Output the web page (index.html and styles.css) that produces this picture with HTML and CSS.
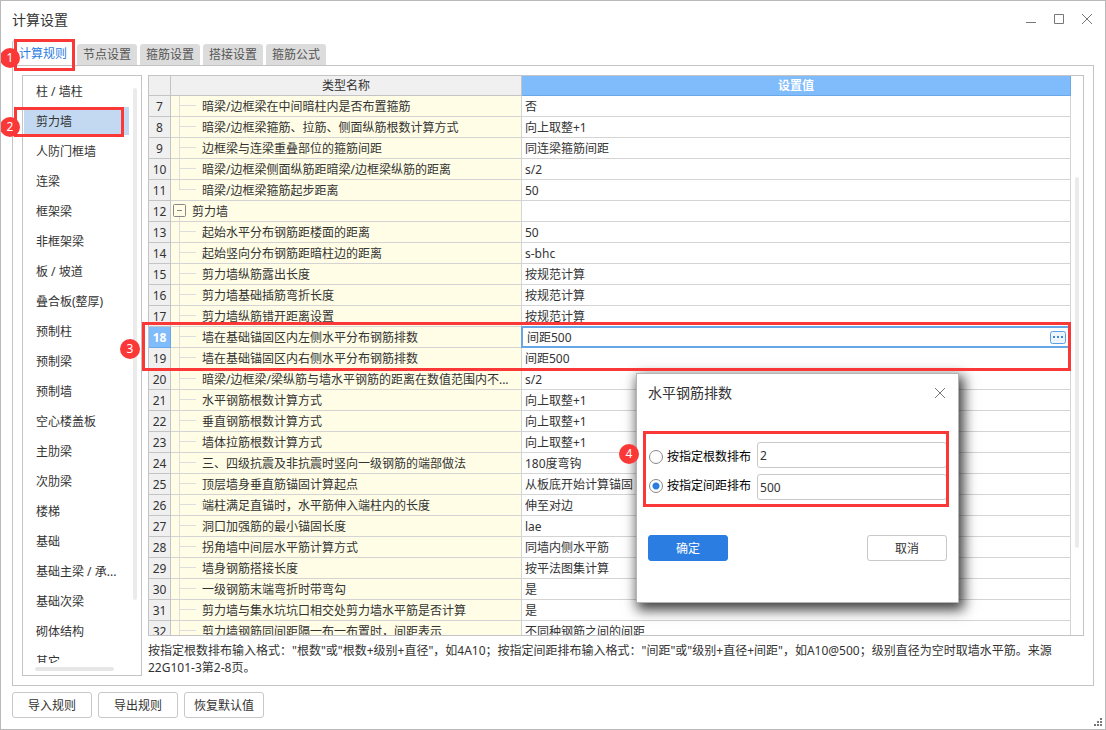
FILE: index.html
```html
<!DOCTYPE html>
<html lang="zh-CN">
<head>
<meta charset="utf-8">
<title>计算设置</title>
<link rel="stylesheet" href="styles.css">
</head>
<body>
<main class="window">
  <header class="titlebar">
    <h1 class="title">计算设置</h1>
    <div class="window-controls">
      <button class="icon-button" type="button" aria-label="最小化"><svg width="12" height="12" viewBox="0 0 12 12"><path d="M1 9.500h10"/></svg></button>
      <button class="icon-button" type="button" aria-label="最大化"><svg width="12" height="12" viewBox="0 0 12 12"><path d="M1.500 1.500h9v9h-9z"/></svg></button>
      <button class="icon-button" type="button" aria-label="关闭"><svg width="12" height="12" viewBox="0 0 12 12"><path d="M1 1l10 10M11 1L1 11"/></svg></button>
    </div>
  </header>

  <nav class="tabs" role="tablist">
    <button class="tab active" type="button" role="tab" aria-selected="true">计算规则</button>
    <button class="tab" type="button" role="tab">节点设置</button>
    <button class="tab" type="button" role="tab">箍筋设置</button>
    <button class="tab" type="button" role="tab">搭接设置</button>
    <button class="tab" type="button" role="tab">箍筋公式</button>
  </nav>

  <section class="panel">
    <aside class="sidebar">
      <div class="sidebar-body">
        <ul class="categories">
          <li class="category">柱 / 墙柱</li>
          <li class="category selected">剪力墙</li>
          <li class="category">人防门框墙</li>
          <li class="category">连梁</li>
          <li class="category">框架梁</li>
          <li class="category">非框架梁</li>
          <li class="category">板 / 坡道</li>
          <li class="category">叠合板(整厚)</li>
          <li class="category">预制柱</li>
          <li class="category">预制梁</li>
          <li class="category">预制墙</li>
          <li class="category">空心楼盖板</li>
          <li class="category">主肋梁</li>
          <li class="category">次肋梁</li>
          <li class="category">楼梯</li>
          <li class="category">基础</li>
          <li class="category">基础主梁 / 承...</li>
          <li class="category">基础次梁</li>
          <li class="category">砌体结构</li>
          <li class="category">其它</li>
        </ul>
        <div class="side-track"><div class="side-thumb"></div></div>
      </div>
      <div class="bottom-thumb"></div>
    </aside>

    <div class="content">
      <div class="grid-frame">
        <div class="grid-view">
          <table class="grid">
            <colgroup><col class="col-number"><col class="col-name"><col></colgroup>
            <thead><tr><th></th><th>类型名称</th><th class="current">设置值</th></tr></thead>
            <tbody>
              <tr><th>7</th><td class="name">暗梁/边框梁在中间暗柱内是否布置箍筋</td><td>否</td></tr>
              <tr><th>8</th><td class="name">暗梁/边框梁箍筋、拉筋、侧面纵筋根数计算方式</td><td>向上取整+1</td></tr>
              <tr><th>9</th><td class="name">边框梁与连梁重叠部位的箍筋间距</td><td>同连梁箍筋间距</td></tr>
              <tr><th>10</th><td class="name">暗梁/边框梁侧面纵筋距暗梁/边框梁纵筋的距离</td><td>s/2</td></tr>
              <tr><th>11</th><td class="name last">暗梁/边框梁箍筋起步距离</td><td>50</td></tr>
              <tr><th>12</th><td class="name group"><button class="toggle" type="button" aria-label="折叠"><svg width="13" height="13" viewBox="0 0 13 13"><rect x=".5" y=".5" width="12" height="12" rx="1"/><path d="M4 6.500h5"/></svg></button>剪力墙</td><td></td></tr>
              <tr><th>13</th><td class="name">起始水平分布钢筋距楼面的距离</td><td>50</td></tr>
              <tr><th>14</th><td class="name">起始竖向分布钢筋距暗柱边的距离</td><td>s-bhc</td></tr>
              <tr><th>15</th><td class="name">剪力墙纵筋露出长度</td><td>按规范计算</td></tr>
              <tr><th>16</th><td class="name">剪力墙基础插筋弯折长度</td><td>按规范计算</td></tr>
              <tr><th>17</th><td class="name">剪力墙纵筋错开距离设置</td><td>按规范计算</td></tr>
              <tr><th class="current">18</th><td class="name">墙在基础锚固区内左侧水平分布钢筋排数</td><td class="editing"><div class="editor"><input class="editor-input" type="text" value="间距500" aria-label="墙在基础锚固区内左侧水平分布钢筋排数"><button class="more" type="button" aria-label="更多"><svg width="16" height="13" viewBox="0 0 16 13"><rect class="more-frame" x=".5" y=".5" width="15" height="12" rx="2"/><path class="more-dots" d="M3 5h2v2H3zM7 5h2v2H7zM11 5h2v2h-2z"/></svg></button></div></td></tr>
              <tr><th>19</th><td class="name">墙在基础锚固区内右侧水平分布钢筋排数</td><td>间距500</td></tr>
              <tr><th>20</th><td class="name">暗梁/边框梁/梁纵筋与墙水平钢筋的距离在数值范围内不...</td><td>s/2</td></tr>
              <tr><th>21</th><td class="name">水平钢筋根数计算方式</td><td>向上取整+1</td></tr>
              <tr><th>22</th><td class="name">垂直钢筋根数计算方式</td><td>向上取整+1</td></tr>
              <tr><th>23</th><td class="name">墙体拉筋根数计算方式</td><td>向上取整+1</td></tr>
              <tr><th>24</th><td class="name">三、四级抗震及非抗震时竖向一级钢筋的端部做法</td><td>180度弯钩</td></tr>
              <tr><th>25</th><td class="name">顶层墙身垂直筋锚固计算起点</td><td>从板底开始计算锚固</td></tr>
              <tr><th>26</th><td class="name">端柱满足直锚时，水平筋伸入端柱内的长度</td><td>伸至对边</td></tr>
              <tr><th>27</th><td class="name">洞口加强筋的最小锚固长度</td><td>lae</td></tr>
              <tr><th>28</th><td class="name">拐角墙中间层水平筋计算方式</td><td>同墙内侧水平筋</td></tr>
              <tr><th>29</th><td class="name">墙身钢筋搭接长度</td><td>按平法图集计算</td></tr>
              <tr><th>30</th><td class="name">一级钢筋末端弯折时带弯勾</td><td>是</td></tr>
              <tr><th>31</th><td class="name">剪力墙与集水坑坑口相交处剪力墙水平筋是否计算</td><td>是</td></tr>
              <tr><th>32</th><td class="name">剪力墙钢筋同间距隔一布一布置时，间距表示</td><td>不同种钢筋之间的间距</td></tr>
            </tbody>
          </table>
        </div>
        <div class="grid-track"><div class="grid-thumb"></div></div>
      </div>
      <p class="hint">按指定根数排布输入格式："根数"或"根数+级别+直径"，如4A10；按指定间距排布输入格式："间距"或"级别+直径+间距"，如A10@500；级别直径为空时取墙水平筋。来源22G101-3第2-8页。</p>
    </div>
  </section>

  <footer class="actions">
    <button class="button" type="button">导入规则</button>
    <button class="button" type="button">导出规则</button>
    <button class="button" type="button">恢复默认值</button>
  </footer>

  <svg class="grip" width="8" height="8" viewBox="0 0 8 8"><path d="M6 0h2v2H6zM3 3h2v2H3zM6 3h2v2H6zM0 6h2v2H0zM3 6h2v2H3zM6 6h2v2H6z"/></svg>

  <form class="dialog" role="dialog" aria-labelledby="dialog-title">
    <div class="dialog-header">
      <h2 class="title" id="dialog-title">水平钢筋排数</h2>
      <button class="icon-button" type="button" aria-label="关闭"><svg width="12" height="12" viewBox="0 0 12 12"><path d="M1 1l10 10M11 1L1 11"/></svg></button>
    </div>
    <div class="options">
      <div class="choices">
        <label class="choice"><input class="radio" type="radio" name="mode">按指定根数排布</label>
        <label class="choice"><input class="radio" type="radio" name="mode" checked>按指定间距排布</label>
      </div>
      <div class="fields">
        <input class="field" type="text" value="2" aria-label="根数">
        <input class="field" type="text" value="500" aria-label="间距">
      </div>
    </div>
    <div class="dialog-actions">
      <button class="button primary" type="button">确定</button>
      <button class="button" type="button">取消</button>
    </div>
  </form>

  <div class="mark mark-tab"></div>
  <div class="mark mark-category"></div>
  <div class="mark mark-rows"></div>
  <div class="mark mark-options"></div>
  <span class="step step-1">1</span>
  <span class="step step-2">2</span>
  <span class="step step-3">3</span>
  <span class="step step-4">4</span>
</main>
</body>
</html>
```
FILE: styles.css
```css
* {
  box-sizing: border-box;
}

body {
  margin: 0;
  font: 12px/18px "Noto Sans", "Noto Sans CJK SC", sans-serif;
  color: #333;
  background: #fff;
  text-spacing-trim: space-all;
}

button,
input {
  margin: 0;
  padding: 0;
  font: inherit;
  color: inherit;
}

.window {
  position: relative;
  display: flex;
  flex-direction: column;
  height: 100vh;
  padding: 0 11px 11px;
  border: 1px solid #b9b9b9;
  overflow: hidden;
}

.titlebar {
  display: flex;
  flex: none;
  align-items: center;
  justify-content: space-between;
  height: 38px;
}

.title {
  margin: 0;
  font-size: 14px;
  font-weight: 400;
  line-height: 20px;
}

.window-controls {
  display: flex;
  gap: 16px;
  padding: 0 1px 2px 0;
}

.icon-button {
  display: flex;
  border: 0;
  background: none;
}

.icon-button svg {
  fill: none;
  stroke: #777;
}

.tabs {
  display: flex;
  flex: none;
  align-items: flex-end;
  gap: 3px;
  height: 26px;
}

.tab {
  width: 60px;
  height: 21px;
  padding-top: 1px;
  border: 0;
  border-radius: 3px 3px 0 0;
  background: #dcdcdc;
  color: #555;
}

.tab.active {
  width: 62px;
  height: 25px;
  border: 1px solid #c8c8c8;
  border-bottom: 0;
  background: #fff;
  color: #2b7de1;
}

.panel {
  display: flex;
  flex: 1;
  gap: 6px;
  min-height: 0;
  padding: 9px;
  border: 1px solid #c4c4c4;
}

.sidebar {
  display: flex;
  flex: none;
  flex-direction: column;
  width: 120px;
  padding: 1px 4px 4px 1px;
  border: 1px solid #c4c4c4;
}

.sidebar-body {
  display: flex;
  flex: 1;
  gap: 4px;
  min-height: 0;
  overflow: hidden;
}

.categories {
  flex: 1;
  margin: 0;
  padding: 0;
  list-style: none;
}

.category {
  height: 30px;
  padding-left: 12px;
  line-height: 30px;
  white-space: nowrap;
}

.category.selected {
  background: linear-gradient(#c2d9f1, #c2d9f1) 0 0 / 100% 28px no-repeat;
}

.side-track {
  width: 4px;
  padding-top: 11px;
}

.side-thumb {
  height: 89%;
  border-radius: 2px;
  background: #ebebeb;
}

.bottom-thumb {
  flex: none;
  width: 79px;
  height: 4px;
  margin: 4px 0 0 11px;
  border-radius: 2px;
  background: #e6e6e6;
}

.content {
  display: flex;
  flex: 1;
  flex-direction: column;
  min-width: 0;
}

.grid-frame {
  display: flex;
  flex: 1;
  min-height: 0;
  border: 1px solid #c4c4c4;
}

.grid-view {
  flex: 1;
  overflow: hidden;
}

.grid-track {
  width: 12px;
  padding: 101px 4px 0;
}

.grid-thumb {
  height: 81%;
  border-radius: 2px;
  background: #ebebeb;
}

.grid {
  width: 100%;
  table-layout: fixed;
  border-collapse: separate;
  border-spacing: 0;
}

.col-number {
  width: 22px;
}

.col-name {
  width: 351px;
}

.grid th,
.grid td {
  height: 21px;
  padding: 2px 0 0 3px;
  border-right: 1px solid #d4d4d4;
  border-bottom: 1px solid #d4d4d4;
  text-align: left;
  font-weight: 400;
  white-space: nowrap;
}

.grid th {
  padding: 2px 0 0;
  border-color: #c4c4c4;
  background: #f0f0f0;
  text-align: center;
}

.grid thead th {
  height: 20px;
  padding-top: 1px;
}

.grid th.current {
  border-color: #6aa8e8;
  background: #80bbfb;
  color: #fff;
  font-weight: 700;
}

.grid .name {
  padding-left: 31px;
  background:
    linear-gradient(#ddd, #ddd) 8px 0 / 1px 100% no-repeat,
    linear-gradient(#ddd, #ddd) 8px 9px / 17px 1px no-repeat,
    #fffde6;
}

.grid .last {
  background:
    linear-gradient(#ddd, #ddd) 8px 0 / 1px 10px no-repeat,
    linear-gradient(#ddd, #ddd) 8px 9px / 17px 1px no-repeat,
    #fffde6;
}

.grid .group {
  padding-left: 2px;
  background: linear-gradient(#ddd, #ddd) 8px 16px / 1px 5px no-repeat, #fffde6;
}

.toggle {
  display: inline-flex;
  margin-right: 6px;
  border: 0;
  background: none;
  vertical-align: -1px;
}

.toggle svg {
  fill: #fffde6;
  stroke: #888;
}

.grid .editing {
  position: relative;
}

.editor {
  position: absolute;
  inset: -1px;
  display: flex;
  align-items: center;
  padding: 0 3px 0 4px;
  border: 2px solid #66a6e6;
  background: #fff;
}

.editor-input {
  flex: 1;
  min-width: 0;
  height: 18px;
  padding-top: 1px;
  border: 0;
  outline: 0;
  background: none;
}

.more {
  display: flex;
  border: 0;
  background: none;
}

.more-frame {
  fill: #eef5fd;
  stroke: #5c9fe4;
}

.more-dots {
  fill: #3d87dc;
}

.hint {
  margin: 0;
  padding-top: 6px;
  line-height: 17px;
}

.actions {
  display: flex;
  flex: none;
  gap: 6px;
  padding-top: 6px;
}

.button {
  width: 80px;
  height: 26px;
  padding-top: 1px;
  border: 1px solid #c8c8c8;
  border-radius: 3px;
  background: #fff;
}

.button.primary {
  border-color: #2b7de1;
  background: #2b7de1;
  color: #fff;
}

.grip {
  position: absolute;
  right: 3px;
  bottom: 3px;
  fill: #777;
}

.dialog {
  position: absolute;
  left: 635px;
  top: 372px;
  width: 323px;
  height: 230px;
  padding: 0 11px;
  border: 1px solid #b4b4b4;
  background: #fff;
  box-shadow: 3px 5px 12px 2px rgba(0, 0, 0, 0.75);
}

.dialog-header {
  display: flex;
  align-items: center;
  justify-content: space-between;
  height: 38px;
  padding-right: 1px;
}

.options {
  display: flex;
  align-items: center;
  gap: 6px;
  padding: 30px 0 35px;
}

.choices {
  display: grid;
  gap: 11px;
  color: #000;
}

.choice {
  display: flex;
  align-items: center;
}

.fields {
  display: grid;
  flex: 1;
  gap: 6px;
}

.radio {
  flex: none;
  width: 14px;
  height: 14px;
  margin: 0 4px 0 1px;
  border: 1px solid #888;
  border-radius: 50%;
  appearance: none;
  background: #fff;
}

.radio:checked {
  background: radial-gradient(circle, #2b7de1 3px, #fff 4px);
}

.field {
  width: 100%;
  height: 26px;
  padding: 0 2px;
  border: 1px solid #c8c8c8;
  border-radius: 3px;
  background: #fff;
}

.dialog-actions {
  display: flex;
  justify-content: space-between;
}

.mark {
  position: absolute;
  border: 3px solid #fb3838;
  pointer-events: none;
}

.mark-tab {
  left: 13px;
  top: 38px;
  width: 61px;
  height: 32px;
}

.mark-category {
  left: 13px;
  top: 106px;
  width: 110px;
  height: 30px;
}

.mark-rows {
  left: 141px;
  right: 34px;
  top: 321px;
  height: 49px;
}

.mark-options {
  left: 642px;
  top: 430px;
  width: 306px;
  height: 76px;
}

.step {
  position: absolute;
  width: 20px;
  height: 20px;
  border-radius: 50%;
  background: #fb3838;
  color: #fff;
  line-height: 20px;
  text-align: center;
}

.step-1 {
  left: -1px;
  top: 47px;
}

.step-2 {
  left: -1px;
  top: 116px;
}

.step-3 {
  left: 119px;
  top: 338px;
}

.step-4 {
  left: 618px;
  top: 443px;
}
```
